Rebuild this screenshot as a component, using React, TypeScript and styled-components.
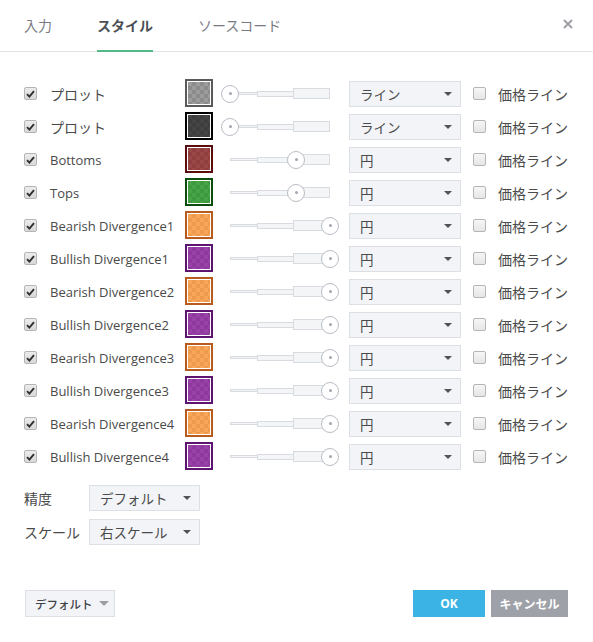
import styled, { createGlobalStyle } from 'styled-components';

const GlobalStyle = createGlobalStyle`
  html, body { margin: 0; padding: 0; background: #ffffff; }
  body {
    font-family: "Open Sans", "Noto Sans CJK JP", sans-serif;
    color: #4a4a4a;
  }
`;

const Dialog = styled.div`
  width: 593px;
  height: 642px;
  display: flex;
  flex-direction: column;
  background: #ffffff;
  box-sizing: border-box;
`;

const Header = styled.div`
  display: flex;
  align-items: stretch;
  height: 51px;
  padding: 0 20px 0 24px;
  border-bottom: 1px solid #e0e3e7;
  flex-shrink: 0;
`;

const Tab = styled.div<{ $active?: boolean }>`
  position: relative;
  display: flex;
  align-items: center;
  margin-right: 45px;
  font-size: 14px;
  font-weight: ${(p) => (p.$active ? 700 : 400)};
  color: ${(p) => (p.$active ? '#4b4f56' : '#787c82')};
  padding-bottom: 2px;
  &::after {
    content: '';
    display: ${(p) => (p.$active ? 'block' : 'none')};
    position: absolute;
    left: 0;
    right: 0;
    bottom: -1px;
    height: 2px;
    background: #53b987;
  }
`;

const Spacer = styled.div`
  flex: 1;
`;

const CloseBtn = styled.div`
  display: flex;
  align-items: center;
  padding-bottom: 4px;
  color: #9a9ea4;
`;

const Body = styled.div`
  padding: 25px 0 0 24px;
`;

const Row = styled.div`
  display: grid;
  grid-template-columns: 26px 135px 36px 128px 124px 25px auto;
  align-items: center;
  height: 33px;
`;

const Check = styled.div<{ $on?: boolean }>`
  width: 11px;
  height: 11px;
  border: 1px solid #b3b5b8;
  border-radius: 2px;
  background: ${(p) => (p.$on ? 'linear-gradient(#ececec, #d8d8d8)' : 'linear-gradient(#f6f6f6, #e6e6e6)')};
  display: flex;
  align-items: center;
  justify-content: center;
`;

const Label = styled.span<{ $jp?: boolean }>`
  font-size: ${(p) => (p.$jp ? 14 : 13)}px;
  color: #4a4a4a;
  white-space: nowrap;
`;

const Swatch = styled.div<{ $border: string }>`
  width: 22px;
  height: 22px;
  border: 2px solid ${(p) => p.$border};
  padding: 1px;
  background: #ffffff;
  box-sizing: content-box;
  margin-top: -1px;
  display: flex;
`;

const SwatchFill = styled.div<{ $fill: string }>`
  flex: 1;
  background:
    linear-gradient(${(p) => p.$fill}, ${(p) => p.$fill}),
    repeating-conic-gradient(#b4b4b4 0 25%, #ffffff 0 50%) 0 0 / 8px 8px;
`;

const SliderBox = styled.div`
  width: 100px;
  padding: 0 9px;
`;

const Track = styled.div`
  position: relative;
  display: flex;
  align-items: center;
  height: 18px;
`;

const Segment = styled.div<{ $w: number; $h: number }>`
  width: ${(p) => p.$w}px;
  height: ${(p) => p.$h}px;
  background: #f4f5f7;
  border: 1px solid #d8dbdf;
  box-sizing: border-box;
  & + & { margin-left: -1px; }
`;

const Thumb = styled.div`
  position: absolute;
  top: 0;
  width: 16px;
  height: 16px;
  margin-left: -9px;
  border: 1px solid #b9bdc4;
  border-radius: 50%;
  background: #ffffff;
  display: flex;
  align-items: center;
  justify-content: center;
  &::after {
    content: '';
    width: 3px;
    height: 3px;
    border-radius: 50%;
    background: #a2a6ae;
  }
`;

const Select = styled.div<{ $w?: number }>`
  width: ${(p) => p.$w ?? 112}px;
  height: 26px;
  box-sizing: border-box;
  border: 1px solid #dcdfe3;
  background: #f2f4f7;
  display: flex;
  align-items: center;
  padding: 0 8px 0 10px;
  font-size: 13.5px;
  color: #4a4a4a;
`;

const SelectText = styled.span`
  flex: 1;
  white-space: nowrap;
`;

const Caret = styled.span<{ $light?: boolean; $size?: number }>`
  width: 0;
  height: 0;
  border-left: ${(p) => p.$size ?? 4}px solid transparent;
  border-right: ${(p) => p.$size ?? 4}px solid transparent;
  border-top: ${(p) => p.$size ?? 4}px solid ${(p) => (p.$light ? '#9a9ea4' : '#4f5358')};
`;

const Options = styled.div`
  display: flex;
  flex-direction: column;
  gap: 8px;
  margin-top: 12px;
`;

const OptionRow = styled.div`
  display: flex;
  align-items: center;
`;

const OptionLabel = styled.span`
  width: 65px;
  font-size: 14px;
  color: #4a4a4a;
`;

const Footer = styled.div`
  margin-top: auto;
  display: flex;
  align-items: center;
  gap: 6px;
  padding: 0 25px 25px 25px;
`;

const DefaultBtn = styled.div`
  width: 90px;
  height: 27px;
  box-sizing: border-box;
  border: 1px solid #dcdfe3;
  background: #f2f4f7;
  display: flex;
  align-items: center;
  gap: 6px;
  padding-left: 9px;
  font-size: 11.5px;
  font-weight: 500;
  color: #3f4247;
  margin-right: auto;
  white-space: nowrap;
`;

const Button = styled.div<{ $bg: string; $w: number }>`
  width: ${(p) => p.$w}px;
  height: 27px;
  background: ${(p) => p.$bg};
  color: #ffffff;
  font-size: 12px;
  font-weight: 700;
  display: flex;
  align-items: center;
  justify-content: center;
`;

type Line = {
  label: string;
  fill: string;
  border: string;
  value: number;
  kind: string;
};

const ORANGE = { fill: 'rgba(247, 150, 60, 0.85)', border: '#b95a1f' };
const PURPLE = { fill: 'rgba(138, 40, 156, 0.88)', border: '#5d1470' };

const LINES: Line[] = [
  { label: 'プロット', fill: 'rgba(128, 128, 128, 0.78)', border: '#5a5a5a', value: 0, kind: 'ライン' },
  { label: 'プロット', fill: 'rgba(48, 48, 48, 0.9)', border: '#000000', value: 0, kind: 'ライン' },
  { label: 'Bottoms', fill: 'rgba(140, 45, 45, 0.88)', border: '#5b0d0d', value: 66, kind: '円' },
  { label: 'Tops', fill: 'rgba(45, 150, 45, 0.88)', border: '#0c4c0c', value: 66, kind: '円' },
  { label: 'Bearish Divergence1', ...ORANGE, value: 100, kind: '円' },
  { label: 'Bullish Divergence1', ...PURPLE, value: 100, kind: '円' },
  { label: 'Bearish Divergence2', ...ORANGE, value: 100, kind: '円' },
  { label: 'Bullish Divergence2', ...PURPLE, value: 100, kind: '円' },
  { label: 'Bearish Divergence3', ...ORANGE, value: 100, kind: '円' },
  { label: 'Bullish Divergence3', ...PURPLE, value: 100, kind: '円' },
  { label: 'Bearish Divergence4', ...ORANGE, value: 100, kind: '円' },
  { label: 'Bullish Divergence4', ...PURPLE, value: 100, kind: '円' },
];

function CheckMark() {
  return (
    <svg width="9" height="8" viewBox="0 0 9 8">
      <path d="M1 4.2 L3.4 6.6 L8 1.2" fill="none" stroke="#2f2f2f" strokeWidth="1.9" />
    </svg>
  );
}

function WidthSlider({ value }: { value: number }) {
  return (
    <SliderBox>
      <Track>
        <Segment $w={28} $h={3} />
        <Segment $w={37} $h={6} />
        <Segment $w={37} $h={11} />
        <Thumb style={{ left: `${value}%` }} />
      </Track>
    </SliderBox>
  );
}

export default function App() {
  return (
    <>
      <GlobalStyle />
      <Dialog>
        <Header>
          <Tab>入力</Tab>
          <Tab $active>スタイル</Tab>
          <Tab>ソースコード</Tab>
          <Spacer />
          <CloseBtn>
            <svg width="10" height="10" viewBox="0 0 10 10">
              <path d="M1 1 L9 9 M9 1 L1 9" stroke="#9a9ea4" strokeWidth="1.8" />
            </svg>
          </CloseBtn>
        </Header>

        <Body>
          {LINES.map((l, i) => (
            <Row key={i}>
              <Check $on>
                <CheckMark />
              </Check>
              <Label $jp={l.label === 'プロット'}>{l.label}</Label>
              <Swatch $border={l.border}>
                <SwatchFill $fill={l.fill} />
              </Swatch>
              <WidthSlider value={l.value} />
              <Select>
                <SelectText>{l.kind}</SelectText>
                <Caret />
              </Select>
              <Check />
              <Label $jp>価格ライン</Label>
            </Row>
          ))}

          <Options>
            <OptionRow>
              <OptionLabel>精度</OptionLabel>
              <Select $w={111}>
                <SelectText>デフォルト</SelectText>
                <Caret />
              </Select>
            </OptionRow>
            <OptionRow>
              <OptionLabel>スケール</OptionLabel>
              <Select $w={111}>
                <SelectText>右スケール</SelectText>
                <Caret />
              </Select>
            </OptionRow>
          </Options>
        </Body>

        <Footer>
          <DefaultBtn>
            デフォルト
            <Caret $light $size={5} />
          </DefaultBtn>
          <Button $bg="#3bb3e4" $w={72}>OK</Button>
          <Button $bg="#9ea1a7" $w={77}>キャンセル</Button>
        </Footer>
      </Dialog>
    </>
  );
}
